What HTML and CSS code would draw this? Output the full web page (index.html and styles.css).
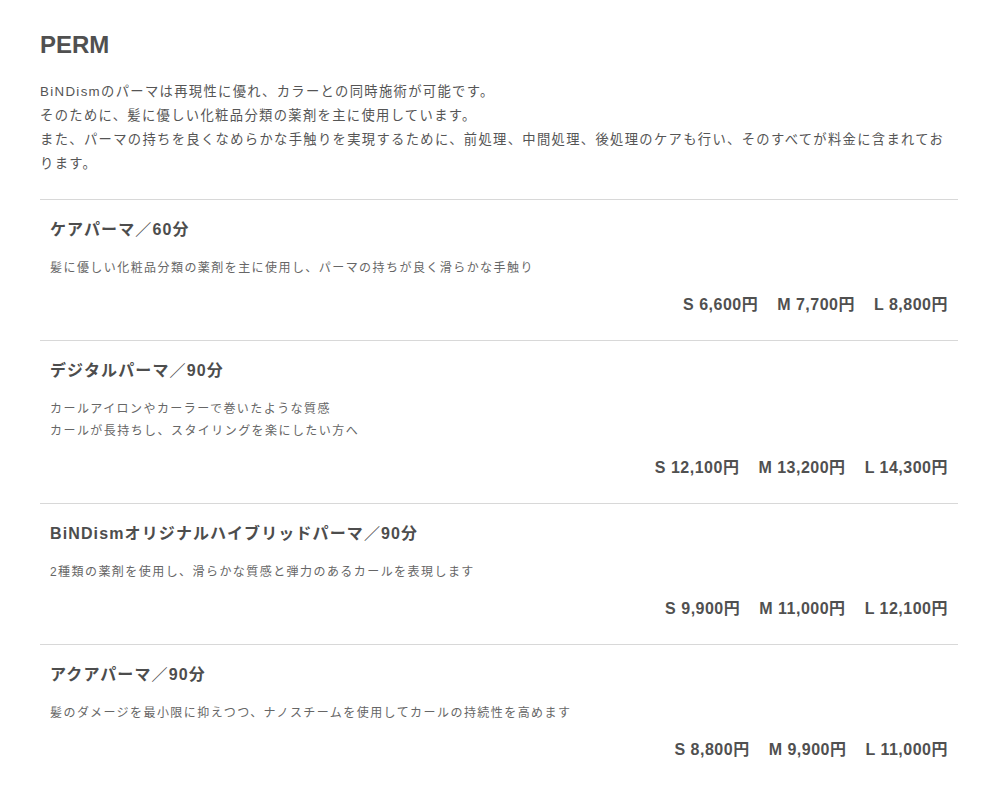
FILE: index.html
```html
<!DOCTYPE html>
<html lang="ja">
<head>
<meta charset="utf-8">
<title>PERM</title>
<link rel="stylesheet" href="styles.css">
</head>
<body>
<main class="page">
  <h1 class="title">PERM</h1>
  <p class="lead">BiNDismのパーマは再現性に優れ、カラーとの同時施術が可能です。<br>そのために、髪に優しい化粧品分類の薬剤を主に使用しています。<br>また、パーマの持ちを良くなめらかな手触りを実現するために、前処理、中間処理、後処理のケアも行い、そのすべてが料金に含まれております。</p>
  <ul class="menu">
    <li class="item">
      <h2 class="item-name">ケアパーマ／60分</h2>
      <p class="item-desc">髪に優しい化粧品分類の薬剤を主に使用し、パーマの持ちが良く滑らかな手触り</p>
      <p class="item-price"><span>S 6,600円</span><span>M 7,700円</span><span>L 8,800円</span></p>
    </li>
    <li class="item">
      <h2 class="item-name">デジタルパーマ／90分</h2>
      <p class="item-desc">カールアイロンやカーラーで巻いたような質感<br>カールが長持ちし、スタイリングを楽にしたい方へ</p>
      <p class="item-price"><span>S 12,100円</span><span>M 13,200円</span><span>L 14,300円</span></p>
    </li>
    <li class="item">
      <h2 class="item-name">BiNDismオリジナルハイブリッドパーマ／90分</h2>
      <p class="item-desc">2種類の薬剤を使用し、滑らかな質感と弾力のあるカールを表現します</p>
      <p class="item-price"><span>S 9,900円</span><span>M 11,000円</span><span>L 12,100円</span></p>
    </li>
    <li class="item">
      <h2 class="item-name">アクアパーマ／90分</h2>
      <p class="item-desc">髪のダメージを最小限に抑えつつ、ナノスチームを使用してカールの持続性を高めます</p>
      <p class="item-price"><span>S 8,800円</span><span>M 9,900円</span><span>L 11,000円</span></p>
    </li>
  </ul>
</main>
</body>
</html>
```

FILE: styles.css
```css
html, body {
  margin: 0;
  padding: 0;
  background: #ffffff;
}

body {
  font-family: "Liberation Sans", "Noto Sans CJK JP", sans-serif;
  color: #555555;
}

.page {
  width: 918px;
  padding: 29px 0 0 40px;
}

.title {
  margin: 0;
  font-size: 24px;
  line-height: 32px;
  font-weight: bold;
  color: #505050;
}

.lead {
  margin: 19px 0 0;
  font-size: 13.3px;
  line-height: 24px;
  letter-spacing: 0.1em;
  color: #555555;
}

.menu {
  list-style: none;
  margin: 23px 0 0;
  padding: 0;
  border-top: 1px solid #d8d8d8;
}

.item {
  padding: 18px 10px 23px;
  border-bottom: 1px solid #d8d8d8;
}

.item:last-child {
  border-bottom: none;
}

.item-name {
  margin: 0;
  font-size: 16px;
  line-height: 24px;
  font-weight: bold;
  letter-spacing: 0.07em;
  color: #4d4d4d;
}

.item-desc {
  margin: 15px 0 0;
  font-size: 12px;
  line-height: 22px;
  letter-spacing: 0.12em;
  color: #666666;
}

.item-price {
  margin: 14px 0 0;
  display: flex;
  justify-content: flex-end;
  gap: 19px;
  font-size: 16px;
  line-height: 24px;
  font-weight: bold;
  letter-spacing: 0.5px;
  color: #505050;
}
```
